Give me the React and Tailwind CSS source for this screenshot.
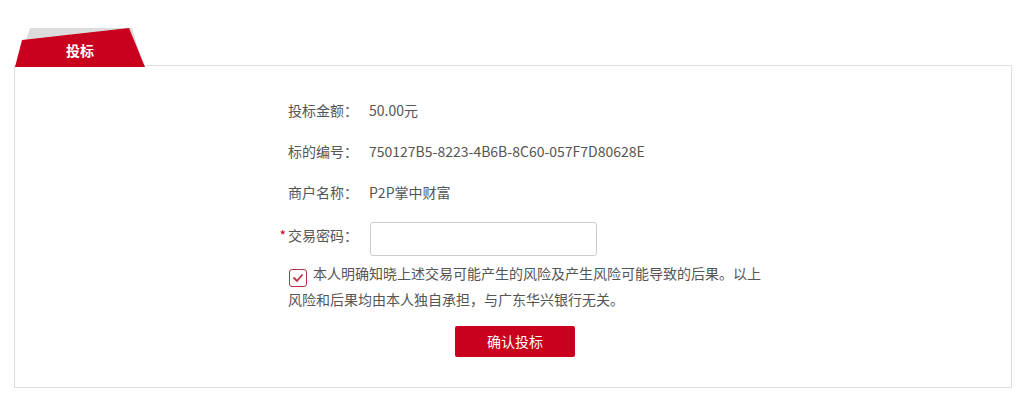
export default function App() {
  const rows = [
    { label: "投标金额：", value: "50.00元" },
    { label: "标的编号：", value: "750127B5-8223-4B6B-8C60-057F7D80628E" },
    { label: "商户名称：", value: "P2P掌中财富" },
  ];

  return (
    <div
      className="w-[1019px] h-[394px] bg-white pt-[28px] pl-[14px] text-[14px] text-[#555]"
      style={{ fontFamily: '"Microsoft YaHei", "Noto Sans CJK SC", "Noto Sans", sans-serif' }}
    >
      <div className="relative h-[38px] w-[150px] -mb-px z-10">
        <svg width="150" height="39" viewBox="14 28 150 39" className="absolute left-0 top-0">
          <polygon points="30,28 132,28 143,64 26,40" fill="#dcdcdc" />
          <polygon points="22,40 129,28 145,67 15,67" fill="#c9001e" />
        </svg>
        <span className="absolute left-[52px] top-[12px] text-white font-bold leading-[20px]">投标</span>
      </div>
      <div className="w-[998px] h-[323px] border border-[#dedede] pl-[263px] pt-[24px]">
        {rows.map((r) => (
          <div key={r.label} className="flex items-center h-[41px]">
            <span className="w-[80px] text-right">{r.label}</span>
            <span className="ml-[11px]">{r.value}</span>
          </div>
        ))}
        <div className="flex items-start mt-[9px]">
          <span className="w-[80px] text-right leading-[26px]">
            <span className="text-[#c9001e] mr-[2px]">*</span>交易密码：
          </span>
          <input
            type="password"
            className="ml-[12px] w-[227px] h-[34px] border border-[#ccc] rounded-[3px] outline-none"
          />
        </div>
        <p className="ml-[10px] mt-[5px] w-[480px] leading-[24px]">
          <span className="inline-flex align-[-4px] items-center justify-center w-[18px] h-[18px] ml-px mr-[6px] border border-[#b83048] rounded-[3px]">
            <svg width="12" height="10" viewBox="0 0 12 10">
              <polyline points="1.5,4.5 5,8 10.5,1.5" fill="none" stroke="#b83048" strokeWidth="1.8" />
            </svg>
          </span>
          本人明确知晓上述交易可能产生的风险及产生风险可能导致的后果。以上风险和后果均由本人独自承担，与广东华兴银行无关。
        </p>
        <button className="ml-[177px] mt-[15px] w-[120px] h-[31px] bg-[#c9001e] text-white rounded-[2px] text-[14px]">
          确认投标
        </button>
      </div>
    </div>
  );
}
